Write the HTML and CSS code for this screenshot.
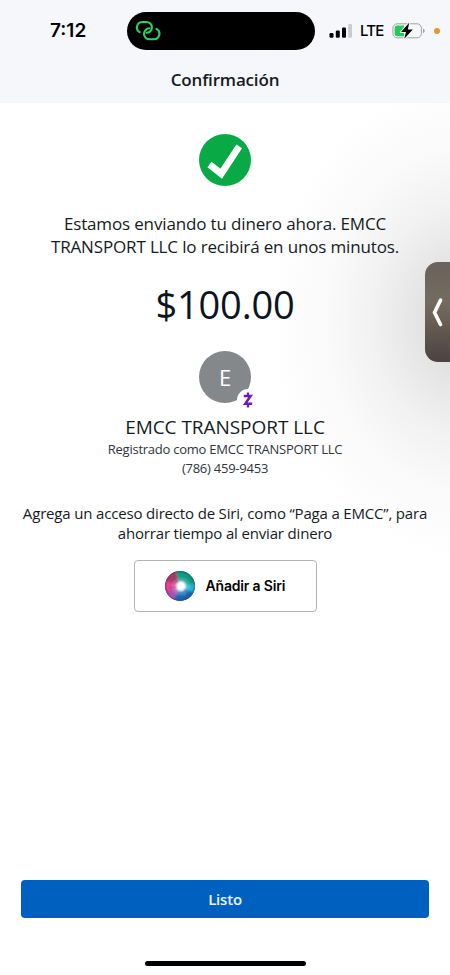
FILE: index.html
```html
<!DOCTYPE html>
<html lang="es">
<head>
<meta charset="utf-8">
<meta name="viewport" content="width=device-width, initial-scale=1">
<title>Confirmación</title>
<link rel="stylesheet" href="styles.css">
</head>
<body>
<div class="screen">
  <header class="header">
    <div class="status">
      <span class="time">7:12</span>
      <div class="island">
        <svg width="26" height="22" viewBox="0 0 26 22" fill="none" stroke="#31d15b" stroke-width="2.100" stroke-linecap="round">
          <path d="M4.600 12.200A5.500 5.500 0 0 1 7 2H11.500A5.400 5.400 0 0 1 11.500 12.800"/>
          <path d="M21.400 8.900A5.500 5.500 0 0 1 19 19.300H14.500A5.400 5.400 0 0 1 14.500 8.300"/>
        </svg>
      </div>
      <svg class="signal" width="24" height="16" viewBox="0 0 24 16">
        <rect x=".5" y="10" width="4" height="4.800" rx="1.200"/>
        <rect x="6.800" y="7.500" width="4" height="7.300" rx="1.200"/>
        <rect x="13" y="4.400" width="4" height="10.400" rx="1.200"/>
        <rect x="19.200" y="1" width="3.800" height="13.800" rx="1.200" fill="#c8cacd"/>
      </svg>
      <span class="network">LTE</span>
      <svg class="battery" width="34" height="18" viewBox="0 0 34 18">
        <rect x=".9" y="1.800" width="28.500" height="14" rx="4.300" fill="none" stroke="#a0a2a5"/>
        <path d="M31 6.500c2.200.8 2.200 3.800 0 4.700z" fill="#a0a2a5"/>
        <path d="M5.200 3.500H12v10.700H5.200C3.500 14.200 2.600 13.200 2.600 11.600V6.100C2.600 4.500 3.500 3.500 5.200 3.500Z" fill="#25ca59"/>
        <path d="M17.200.8L9 10h5l-1.700 6.700L20.800 7.500h-5z" fill="#000" stroke="#f5f7fb" stroke-width="2" paint-order="stroke" stroke-linejoin="round"/>
      </svg>
      <span class="mic-dot"></span>
    </div>
    <h1 class="title">Confirmación</h1>
  </header>

  <main class="content">
    <svg class="success" width="52" height="52" viewBox="0 0 52 52">
      <circle cx="26" cy="26" r="26" fill="#09aa46"/>
      <path d="M10.500 30.500L22.200 39.700L40.200 12.300" fill="none" stroke="#fff" stroke-width="6.800"/>
    </svg>
    <p class="message">Estamos enviando tu dinero ahora. EMCC<br>TRANSPORT LLC lo recibirá en unos minutos.</p>
    <div class="amount">$100.00</div>
    <div class="avatar">E
      <span class="badge">
        <svg width="10" height="16" viewBox="0 0 10 16" fill="none" stroke="#6b1cc0" stroke-width="2.500">
          <path d="M.8 3.900H7.600L2.200 11.700H9.200"/><path d="M5 .4V4M5 11.700v3.700" stroke-width="2.200"/>
        </svg>
      </span>
    </div>
    <h2 class="name">EMCC TRANSPORT LLC</h2>
    <p class="detail">Registrado como EMCC TRANSPORT LLC<br>(786) 459-9453</p>
    <p class="hint">Agrega un acceso directo de Siri, como “Paga a EMCC”, para<br>ahorrar tiempo al enviar dinero</p>
    <button class="siri">
      <svg width="30" height="30" viewBox="0 0 30 30">
        <defs>
          <radialGradient id="glow"><stop offset="0" stop-color="#fff"/><stop offset=".24" stop-color="#effcff" stop-opacity=".85"/><stop offset=".6" stop-color="#c8eaff" stop-opacity=".3"/><stop offset="1" stop-color="#fff" stop-opacity="0"/></radialGradient>
          <radialGradient id="rim"><stop offset=".84" stop-color="#24314f" stop-opacity="0"/><stop offset="1" stop-color="#24314f" stop-opacity=".45"/></radialGradient>
          <filter id="soft"><feGaussianBlur stdDeviation="1.300"/></filter>
          <clipPath id="orb"><circle cx="15" cy="15" r="15"/></clipPath>
        </defs>
        <g clip-path="url(#orb)">
          <path d="M0 0h30v30H0z" fill="#7a4a96"/>
          <g filter="url(#soft)">
            <path d="M15 15L9-3h24v16z" fill="#0f9b80"/>
            <path d="M15 15L33 12v14z" fill="#1cb4d8"/>
            <path d="M15 15l18 9v10H5z" fill="#1266b4"/>
            <path d="M15 15L7 33H-3V18z" fill="#b04cb0"/>
            <path d="M15 15L-3 22V5z" fill="#ee3c94"/>
            <path d="M15 15L-3 8V-3H10z" fill="#a83b62"/>
          </g>
          <circle cx="15" cy="15" r="15" fill="url(#rim)"/>
          <circle cx="16" cy="15.500" r="10.500" fill="url(#glow)"/>
          <path d="M16 15L7 5M16 15L25 25M16 15L4 17" stroke="#53445f" stroke-width=".6" opacity=".5"/>
          <circle cx="16" cy="15" r="4.500" fill="#fff" filter="url(#soft)"/>
        </g>
      </svg>
      <span>Añadir a Siri</span>
    </button>
  </main>

  <footer class="footer">
    <button class="done">Listo</button>
    <div class="home-bar"></div>
  </footer>

  <div class="side-tab">
    <svg width="11" height="29" viewBox="0 0 11 29" fill="none" stroke="#fff" stroke-width="3.600" stroke-linecap="round" stroke-linejoin="round"><path d="M8.500 2.200L2.500 14.500L8.500 26.500"/></svg>
  </div>
</div>
</body>
</html>
```
FILE: styles.css
```css
* { box-sizing: border-box; }
body { margin: 0; background: #fff; }
h1, h2, p { margin: 0; font-weight: 400; }
svg { display: block; flex: none; }
button { font: inherit; padding: 0; }

.screen {
  position: relative;
  display: flex;
  flex-direction: column;
  width: 450px;
  height: 975px;
  overflow: hidden;
  font-family: "Open Sans", sans-serif;
  color: #151b24;
  background: radial-gradient(ellipse 200px 240px at 470px 320px, #d8d8d8 0%, #e2e2e2 22%, #f1f1f1 48%, #fafafa 72%, #fff 100%) #fff;
}
.header { height: 103px; flex: none; background: #f5f7fb; }
.status { display: flex; align-items: center; height: 62px; padding-left: 50px; }
.time { width: 77px; font: 600 19px/20px Inter, sans-serif; color: #000; }
.island { display: flex; align-items: center; width: 188px; height: 38px; padding-left: 8px; border-radius: 19px; background: #000; }
.signal { margin-left: 14px; }
.network { width: 25px; margin-left: 7px; font: 500 15px/20px Inter, sans-serif; letter-spacing: -.8px; color: #000; }
.battery { margin-left: 7px; }
.mic-dot { width: 6px; height: 6px; margin-left: 8px; border-radius: 50%; background: #e39632; }
.title { font-size: 17px; line-height: 24px; font-weight: 600; letter-spacing: -.17px; text-align: center; padding-top: 6px; }

.content { display: flex; flex-direction: column; align-items: center; flex: 1; padding-top: 31px; text-align: center; white-space: nowrap; }
.message { margin-top: 26px; font-size: 17px; line-height: 23px; letter-spacing: -.15px; }
.amount { margin-top: 19px; margin-bottom: 1px; font-size: 38px; line-height: 54px; letter-spacing: -.2px; color: #0b1420; }
.avatar { position: relative; width: 52px; height: 52px; margin-top: 19px; border-radius: 50%; background: #85888b; color: #fff; font-size: 22px; line-height: 53px; }
.badge { position: absolute; left: 38px; top: 38px; display: flex; align-items: center; justify-content: center; width: 22px; height: 22px; border-radius: 50%; background: #fff; }
.name { margin-top: 11px; font-size: 19px; line-height: 26px; letter-spacing: -.05px; }
.detail { font-size: 13px; line-height: 18.500px; letter-spacing: -.24px; color: #30343b; }
.hint { margin-top: 26px; font-size: 15px; line-height: 20px; letter-spacing: -.17px; }
.siri { display: flex; align-items: center; width: 183px; height: 52px; margin-top: 17px; padding-left: 30px; gap: 11px; border: 1px solid #b3b3b3; border-radius: 4px; background: #fff; font: 600 14px/20px Inter, sans-serif; letter-spacing: -.18px; color: #000; }

.footer { display: flex; flex-direction: column; align-items: center; height: 95px; flex: none; }
.done { width: 408px; height: 38px; border: 0; border-radius: 4px; background: #0060bf; color: #eaf6ff; font-size: 15px; font-weight: 600; letter-spacing: -.2px; }
.home-bar { width: 161px; height: 5px; margin-top: 43px; border-radius: 3px; background: #000; }
.side-tab { position: absolute; right: 0; top: 262px; display: flex; align-items: center; width: 25px; height: 100px; padding-left: 7px; border-radius: 13px 0 0 13px; background: linear-gradient(#6a625b, #746b60 40%, #62574f 70%, #4b4242); }
```
